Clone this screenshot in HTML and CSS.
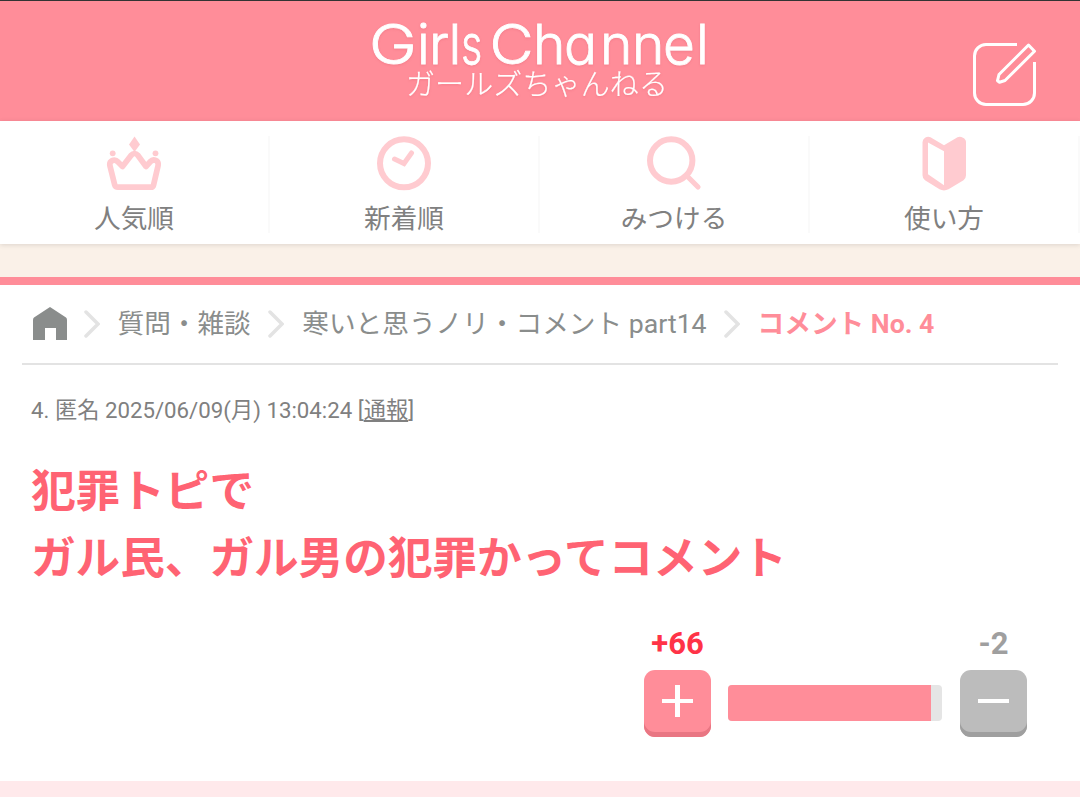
FILE: index.html
```html
<!DOCTYPE html>
<html lang="ja">
<head>
<meta charset="utf-8">
<title>Girls Channel</title>
<link rel="stylesheet" href="styles.css">
</head>
<body>
<header class="header">
  <svg class="logo" width="370" height="110" viewBox="355 5 370 110" role="img" aria-label="Girls Channel">
    <g class="logo-en">
      <text transform="translate(369 64) scale(1.17 1)">G</text>
      <text y="64" x="417 429 448.500">irl</text>
      <text transform="translate(461 64) scale(.75 1)">s</text>
      <text transform="translate(489.500 64) scale(1.1 1)">C</text>
      <text y="64" x="533 564 600 632 663 696">hannel</text>
    </g>
    <text class="logo-ja" y="95" x="406" textLength="262">ガールズちゃんねる</text>
  </svg>
  <svg class="compose" width="66" height="66" viewBox="972 41 66 66" fill="none" stroke="#fff" stroke-width="3">
    <path d="M1017 44.500H986a11.500 11.500 0 0 0-11.500 11.500V93a11.500 11.500 0 0 0 11.500 11.500h37a11.500 11.500 0 0 0 11.500-11.500V62"/>
    <path stroke-linejoin="round" d="M1028.500 45L1034.500 51.200L1005 80.500L999.500 82.200L997.500 80.700L999 74.500Z"/>
  </svg>
</header>
<nav class="nav">
  <a class="tab">
    <svg width="56" height="56" viewBox="0 0 56 56"><path fill="#ffcbd0" d="M28.500 1.500l5.500 8L28.500 17 23 9.500z"/><circle cx="6.700" cy="18.300" r="2.900" fill="#ffcbd0"/><circle cx="49.500" cy="18.300" r="2.900" fill="#ffcbd0"/><path fill="none" stroke="#ffcbd0" stroke-width="5.700" stroke-linejoin="round" d="M12 52.200H45Q47 52.200 47.500 50.200L52 31C53.300 25 47 23.700 44.500 26.500L40 31.500 32 20.500Q28.500 16.500 25 20.500L16.500 31.500 12 27C8.500 23 2.800 26 4 31L8.800 50.200Q9.400 52.200 12 52.200Z"/></svg>
    <span>人気順</span>
  </a>
  <a class="tab">
    <svg width="56" height="56" viewBox="0 0 56 56" fill="none" stroke="#ffcbd0"><circle cx="28" cy="28.300" r="24" stroke-width="6"/><path stroke-width="5" stroke-linecap="round" d="M18.500 24l9.500 4.500 7.500-10.500"/></svg>
    <span>新着順</span>
  </a>
  <a class="tab">
    <svg width="56" height="56" viewBox="0 0 56 56" fill="none" stroke="#ffcbd0"><circle cx="25.200" cy="25.500" r="21.200" stroke-width="6"/><path stroke-width="5.200" stroke-linecap="round" d="M41 41l11 11"/></svg>
    <span>みつける</span>
  </a>
  <a class="tab">
    <svg width="56" height="56" viewBox="0 0 56 56"><path fill="#ffcbd0" fill-rule="evenodd" d="M14.500 2.300L28 10.300 41.500 2.300Q44 .8 47 2.800 50 4.300 50 7.300V40.300Q50 43.300 47.500 45.300L32.500 54.300Q28 56.500 23.500 54.300L9 45.300Q6.500 43.300 6.500 40.300V7.300Q6.500 4.300 9 2.800 12 .8 14.500 2.300ZM12 7.500V39.300L28 50.300V16.300Z"/></svg>
    <span>使い方</span>
  </a>
</nav>
<main class="main">
  <div class="crumbs">
    <svg class="home" width="34" height="33" viewBox="0 0 34 33"><path fill="#8a8d8c" d="M17 0L33 10.500Q34 11.300 34 13V33H23V21H12V33H0V13Q0 11.300 1 10.500Z"/></svg>
    <svg class="arrow" width="16" height="28" viewBox="0 0 16 28"><path d="M2 2l12 12L2 26"/></svg>
    <a>質問・雑談</a>
    <svg class="arrow" width="16" height="28" viewBox="0 0 16 28"><path d="M2 2l12 12L2 26"/></svg>
    <a class="topic">寒いと思うノリ・コメント part14</a>
    <svg class="arrow" width="16" height="28" viewBox="0 0 16 28"><path d="M2 2l12 12L2 26"/></svg>
    <b>コメント No. 4</b>
  </div>
  <div class="meta">4. 匿名 2025/06/09(月) 13:04:24 [<a>通報</a>]</div>
  <div class="comment">犯罪トピで<br>ガル民、ガル男の犯罪かってコメント</div>
  <div class="votes">
    <div class="vote"><span class="count plus">+66</span><button class="btn btn-plus" aria-label="プラス"><svg width="31" height="32" viewBox="0 0 31 32"><path fill="#fff" d="M13 0h5v14h13v4H18v14h-5V18H0v-4h13z"/></svg></button></div>
    <div class="bar"><div class="fill"></div></div>
    <div class="vote"><span class="count minus">-2</span><button class="btn btn-minus" aria-label="マイナス"><svg width="31" height="32" viewBox="0 0 31 32"><path fill="#fff" d="M0 14h31v4H0z"/></svg></button></div>
  </div>
</main>
</body>
</html>
```
FILE: styles.css
```css
* { box-sizing: border-box; }
body {
  margin: 0;
  height: 797px;
  overflow: hidden;
  background: #faf1e8;
  color: #808080;
  font-family: Roboto, "Noto Sans CJK JP", sans-serif;
}
svg { display: block; flex: none; }
.header {
  height: 121px;
  border-top: 1px solid #333;
  background: #ff8d99;
  display: grid;
  grid-template-columns: 1fr 370px 1fr;
}
.logo { grid-column: 2; margin-top: 4px; overflow: visible; filter: drop-shadow(0 1px 1px rgba(210, 80, 95, .25)); }
.logo text { fill: #fff; }
.logo-en { font: 300 55px Inter, sans-serif; font-feature-settings: "cv11"; stroke: #fff; stroke-width: .8px; }
.logo-ja { font: 300 29px "Noto Sans CJK JP", sans-serif; stroke: #fff; stroke-width: .2px; }
.compose { justify-self: end; margin: 40px 42px 0 0; }
.nav {
  position: relative;
  height: 123px;
  padding-top: 15px;
  background: #fff;
  box-shadow: 0 1px 5px rgba(0, 0, 0, .12);
  display: grid;
  grid-template-columns: repeat(4, 270px);
}
.tab {
  height: 97px;
  border-right: 2px solid #fafafa;
  display: flex;
  flex-direction: column;
  align-items: center;
  font-size: 26.67px;
  line-height: 40px;
}
.tab svg { margin: -1px 0 8px; }
.main {
  margin-top: 33px;
  height: 504px;
  border-top: 8px solid #ff8d99;
  background: #fff;
}
.crumbs {
  height: 80px;
  margin: 0 22px;
  padding-left: 11px;
  border-bottom: 2px solid #e3e3e3;
  display: flex;
  align-items: center;
  color: #8a8d8c;
  font-size: 26.67px;
  line-height: 40px;
  white-space: nowrap;
}
.crumbs b { color: #ff8d99; }
.home { margin-bottom: 2px; }
.arrow { margin: 0 17.500px 0 17.500px; fill: none; stroke: #e3e3e3; stroke-width: 3.500; stroke-linecap: round; }
.home + .arrow { margin-left: 17px; }
.topic { margin-left: .5px; }
.meta { margin: 29px 31px 0; font-size: 22.25px; line-height: 32px; }
.meta a { text-decoration: underline; }
.comment {
  margin: 33px 31px 0;
  color: #ff6373;
  font-size: 44.6px;
  line-height: 66.67px;
  font-weight: 700;
}
.votes { margin: 33px 53px 0 0; display: flex; justify-content: flex-end; align-items: flex-end; }
.vote { width: 67px; text-align: center; }
.count { display: block; height: 45px; padding-top: 1px; font-size: 31px; line-height: 36px; font-weight: 700; }
.plus { color: #ff3347; }
.minus { color: #9f9f9f; }
.btn {
  width: 67px;
  height: 67px;
  padding: 0 0 5px;
  border: 0;
  border-radius: 11px;
  display: flex;
  align-items: center;
  justify-content: center;
}
.btn-plus { background: #ff8d99; box-shadow: inset 0 -5px #e97683; }
.btn-minus { background: #bcbcbc; box-shadow: inset 0 -5px #9f9f9f; }
.bar { width: 214px; height: 36px; margin: 0 18px 16px 17px; border-radius: 4px; overflow: hidden; background: #e5e5e5; }
.fill { width: 95%; height: 36px; background: #ff8d99; }
body::after { content: ""; display: block; height: 16px; background: #ffe9eb; }
```
